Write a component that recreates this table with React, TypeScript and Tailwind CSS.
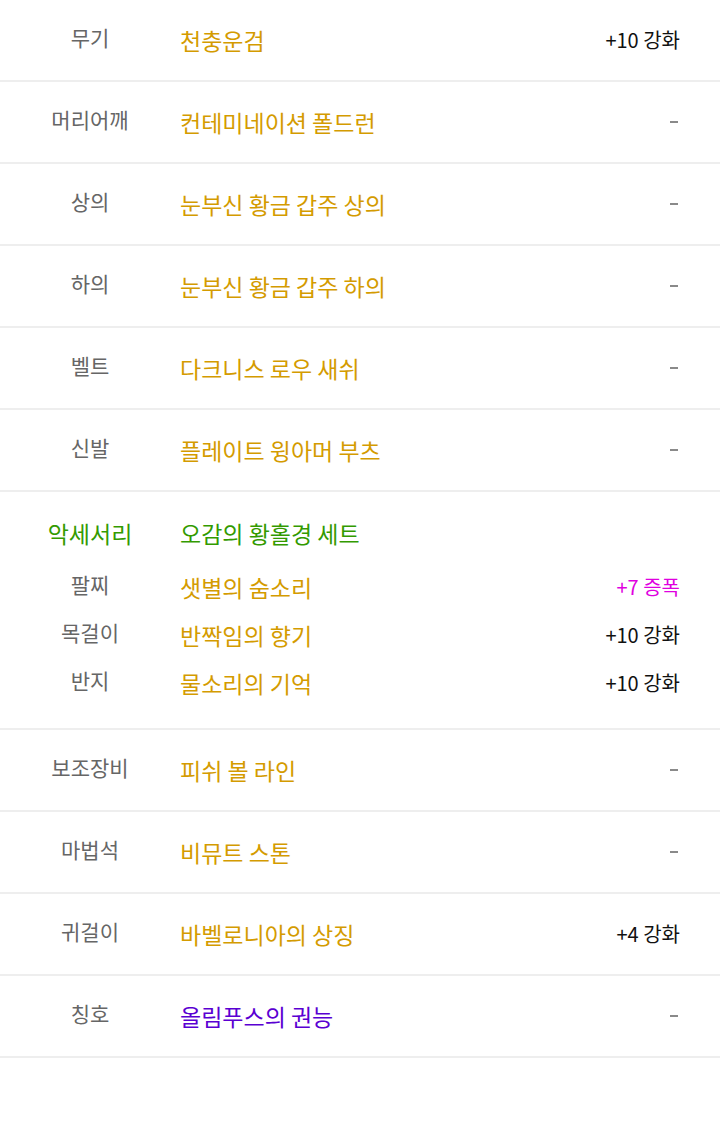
import React from "react";

const AMBER = "text-[#d49b00]";

type Row = { label: string; name: string; right: string; nameColor?: string };

const top: Row[] = [
  { label: "무기", name: "천충운검", right: "+10 강화" },
  { label: "머리어깨", name: "컨테미네이션 폴드런", right: "-" },
  { label: "상의", name: "눈부신 황금 갑주 상의", right: "-" },
  { label: "하의", name: "눈부신 황금 갑주 하의", right: "-" },
  { label: "벨트", name: "다크니스 로우 새쉬", right: "-" },
  { label: "신발", name: "플레이트 윙아머 부츠", right: "-" },
];

const bottom: Row[] = [
  { label: "보조장비", name: "피쉬 볼 라인", right: "-" },
  { label: "마법석", name: "비뮤트 스톤", right: "-" },
  { label: "귀걸이", name: "바벨로니아의 상징", right: "+4 강화" },
  { label: "칭호", name: "올림푸스의 권능", right: "-", nameColor: "text-[#5a00d2]" },
];

function Right({ v, cls }: { v: string; cls?: string }) {
  if (v === "-") {
    return <span className="inline-block w-[8px] h-[2px] bg-[#8a8a8a] mr-[2px]" />;
  }
  return <span className={`text-[20px] ${cls ?? "text-[#111]"}`}>{v}</span>;
}

function ItemRow({ r }: { r: Row }) {
  return (
    <div className="flex items-center h-[82px] border-b-2 border-[#eeeeee]">
      <div className="w-[180px] text-center text-[21px] text-[#666] -mt-[4px]">{r.label}</div>
      <div className={`flex-1 text-[23px] ${r.nameColor ?? AMBER}`}>{r.name}</div>
      <div className="pr-[40px] flex items-center">
        <Right v={r.right} />
      </div>
    </div>
  );
}

function SubLine({ label, name, right, rightCls, labelCls, nameCls }: { label: string; name: string; right?: string; rightCls?: string; labelCls: string; nameCls: string }) {
  return (
    <div className="flex items-center h-[48px]">
      <div className={`w-[180px] text-center ${labelCls}`}>{label}</div>
      <div className={`flex-1 ${nameCls}`}>{name}</div>
      <div className="pr-[40px]">{right && <Right v={right} cls={rightCls} />}</div>
    </div>
  );
}

export default function App() {
  return (
    <div
      className="w-[720px] bg-white"
      style={{ fontFamily: '"Noto Sans CJK KR", "Noto Sans", sans-serif' }}
    >
      {top.map((r) => (
        <ItemRow key={r.label} r={r} />
      ))}
      <div className="border-b-2 border-[#eeeeee] pt-[17px] pb-[21px] h-[238px]">
        <SubLine label="악세서리" name="오감의 황홀경 세트" labelCls="text-[23px] text-[#339a00]" nameCls="text-[23px] text-[#339a00]" />
        <div className="h-[6px]" />
        <SubLine label="팔찌" name="샛별의 숨소리" right="+7 증폭" rightCls="text-[#e000e0]" labelCls="text-[21px] text-[#666] -mt-[4px]" nameCls={`text-[23px] ${AMBER}`} />
        <SubLine label="목걸이" name="반짝임의 향기" right="+10 강화" labelCls="text-[21px] text-[#666] -mt-[4px]" nameCls={`text-[23px] ${AMBER}`} />
        <SubLine label="반지" name="물소리의 기억" right="+10 강화" labelCls="text-[21px] text-[#666] -mt-[4px]" nameCls={`text-[23px] ${AMBER}`} />
      </div>
      {bottom.map((r) => (
        <ItemRow key={r.label} r={r} />
      ))}
      <div className="h-[66px]" />
    </div>
  );
}
